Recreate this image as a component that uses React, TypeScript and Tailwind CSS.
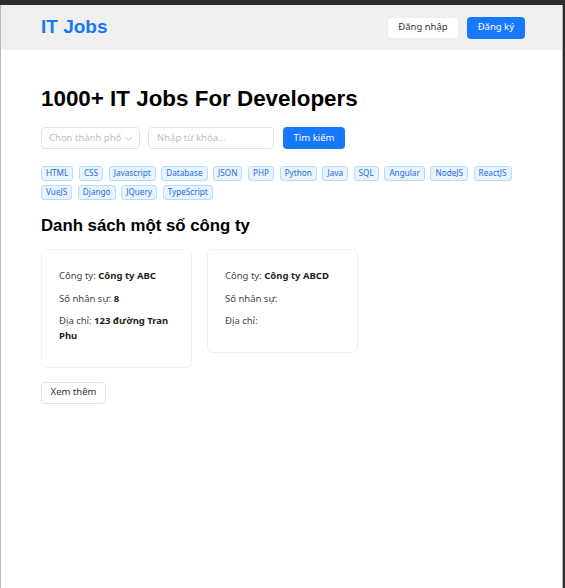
import React from "react";

const tags = [
  "HTML","CSS","Javascript","Database","JSON","PHP","Python","Java","SQL","Angular","NodeJS","ReactJS","VueJS","Django","JQuery","TypeScript",
];

const sans = { fontFamily: '"Noto Sans", "Open Sans", sans-serif' };
const arial = { fontFamily: '"Liberation Sans", Arial, sans-serif' };

export default function App() {
  return (
    <div className="w-[565px] h-[588px] bg-[#2d2d2f] pt-[5px] pr-[2px] overflow-hidden">
      <div className="h-full bg-white border-l border-r border-[#b8b8b8] text-[9.5px] text-[#262626]" style={sans}>
        <header className="h-[45px] bg-[#f0f0f0] flex items-center justify-between pl-[40px] pr-[37px]">
          <div className="text-[19px] font-bold text-[#1677ff]" style={arial}>IT Jobs</div>
          <div className="flex gap-[8px]">
            <button className="h-[22px] px-[10px] rounded-[4px] bg-white border border-[#ececec] text-[#333]">Đăng nhập</button>
            <button className="h-[22px] px-[11px] rounded-[4px] bg-[#1677ff] text-white">Đăng ký</button>
          </div>
        </header>
        <main className="px-[40px]">
          <h1 className="mt-[36px] text-[22.4px] leading-[26px] font-bold text-black" style={arial}>1000+ IT Jobs For Developers</h1>
          <div className="mt-[15px] flex items-center">
            <div className="w-[99px] h-[22px] rounded-[4px] border border-[#e3e3e3] flex items-center justify-between pl-[7px] pr-[6px] text-[#c0c0c0] whitespace-nowrap">
              <span>Chọn thành phố</span>
              <svg width="9" height="9" viewBox="0 0 10 10" fill="none" stroke="#bdbdbd" strokeWidth="1"><path d="M1.5 3.5 5 7l3.5-3.5" /></svg>
            </div>
            <div className="ml-[8px] w-[126px] h-[22px] rounded-[4px] border border-[#e3e3e3] flex items-center pl-[8px] text-[#c0c0c0] whitespace-nowrap">Nhập từ khóa...</div>
            <button className="ml-[9px] w-[62px] h-[22px] rounded-[4px] bg-[#1677ff] text-white">Tìm kiếm</button>
          </div>
          <div className="mt-[17px] flex flex-wrap gap-x-[5.6px] gap-y-[4px] w-[490px]">
            {tags.map((t) => (
              <span key={t} className="h-[15px] px-[4px] flex items-center rounded-[3px] bg-[#e6f4ff] border border-[#b7dcff] text-[8.2px] text-[#2f6ad0]">{t}</span>
            ))}
          </div>
          <h2 className="mt-[15px] text-[16.8px] leading-[21px] font-bold text-black" style={arial}>Danh sách một số công ty</h2>
          <div className="mt-[13px] flex items-start gap-[15px]">
            <div className="w-[151px] rounded-[6px] border border-[#f0f0f0] pt-[18px] pb-[16px] px-[17px]">
              <p className="leading-[15px] mb-[7.5px] text-[#444]">Công ty: <b className="text-[#1f1f1f]">Công ty ABC</b></p>
              <p className="leading-[15px] mb-[7.5px] text-[#444]">Số nhân sự: <b className="text-[#1f1f1f]">8</b></p>
              <p className="leading-[15px] mb-[7.5px] text-[#444]">Địa chỉ: <b className="text-[#1f1f1f]">123 đường Tran Phu</b></p>
            </div>
            <div className="w-[151px] rounded-[6px] border border-[#f0f0f0] pt-[18px] pb-[16px] px-[17px]">
              <p className="leading-[15px] mb-[7.5px] text-[#444]">Công ty: <b className="text-[#1f1f1f]">Công ty ABCD</b></p>
              <p className="leading-[15px] mb-[7.5px] text-[#444]">Số nhân sự: </p>
              <p className="leading-[15px] mb-[7.5px] text-[#444]">Địa chỉ: </p>
            </div>
          </div>
          <button className="mt-[14px] h-[22px] w-[65px] rounded-[4px] border border-[#e3e3e3] bg-white text-[#333]">Xem thêm</button>
        </main>
      </div>
    </div>
  );
}
